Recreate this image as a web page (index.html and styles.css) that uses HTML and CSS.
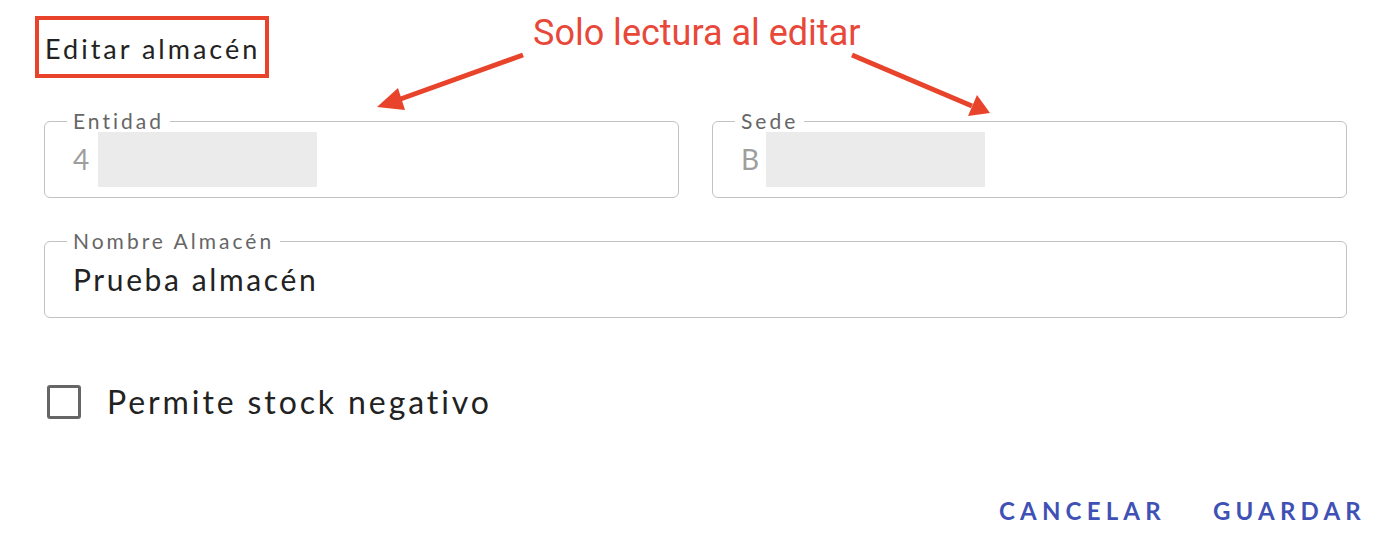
FILE: index.html
```html
<!DOCTYPE html>
<html lang="es">
<head>
    <meta charset="UTF-8">
    <title>Editar almacén</title>
    <link rel="stylesheet" href="styles.css">
</head>
<body>
  <div class="dialog">
    <div class="head">
      <h2 class="title">Editar almacén</h2>
    </div>
    <div class="row two">
      <fieldset class="field readonly">
        <legend>Entidad</legend>
        <div class="value">4<span class="redact"></span></div>
      </fieldset>
      <fieldset class="field readonly">
        <legend>Sede</legend>
        <div class="value">B<span class="redact"></span></div>
      </fieldset>
    </div>
    <div class="row">
      <fieldset class="field">
        <legend>Nombre Almacén</legend>
        <div class="value">Prueba almacén</div>
      </fieldset>
    </div>
    <label class="check">
      <span class="box"></span>
      <span>Permite stock negativo</span>
    </label>
    <div class="actions">
      <button class="btn">CANCELAR</button>
      <button class="btn">GUARDAR</button>
    </div>

    <!-- nota sobre la captura -->
    <div class="note">Solo lectura al editar</div>
    <svg class="arrows" width="1390" height="554" viewBox="0 0 1390 554">
      <line x1="523" y1="55" x2="395" y2="101" stroke="#e8432b" stroke-width="5"/>
      <polygon points="377,107 398,88 405,110" fill="#e8432b"/>
      <line x1="852" y1="55" x2="972" y2="106" stroke="#e8432b" stroke-width="5"/>
      <polygon points="990,113 968,116 977,95" fill="#e8432b"/>
    </svg>
  </div>
</body>
</html>
```

FILE: styles.css
```css
* {
  margin: 0px;
  padding: 0px;
  box-sizing: border-box;
}
body {
  background: #fff;
  font-family: Lato, "Noto Sans", sans-serif;
  color: #222;
}
.dialog {
  position: relative;
  width: 1390px;
  height: 554px;
  padding: 16px 43px 0 44px;
}
.head {
  display: flex;
}
.title {
  margin-left: -9px;
  height: 62px;
  width: 234px;
  border: 4px solid #e8432b;
  padding: 4px 0 0 6px;
  font-size: 27px;
  font-weight: 400;
  letter-spacing: 3px;
  line-height: 50px;
  color: #222;
}
.row {
  display: flex;
  gap: 33px;
  margin-top: 33px;
}
.field {
  flex: 1;
  border: 1px solid #c2c2c2;
  border-radius: 6px;
  padding: 0 28px 10px 28px;
}
.field legend {
  margin-left: -6px;
  padding: 0 6px 0 6px;
  font-size: 21px;
  line-height: 20px;
  color: #666;
  letter-spacing: 3px;
}
.value {
  position: relative;
  height: 56px;
  line-height: 56px;
  font-size: 30px;
  letter-spacing: 2.6px;
  color: #222;
}
.readonly .value {
  color: #9e9e9e;
  font-size: 28px;
}
.redact {
  position: absolute;
  left: 25px;
  top: 1px;
  width: 219px;
  height: 55px;
  background: #ebebeb;
}
.check {
  display: flex;
  align-items: center;
  gap: 26px;
  margin-top: 64px;
  margin-left: 3px;
  font-size: 32px;
  letter-spacing: 2.9px;
  color: #222;
}
.box {
  width: 34px;
  height: 34px;
  border: 3px solid #666;
  border-radius: 3px;
}
.actions {
  display: flex;
  justify-content: flex-end;
  gap: 47px;
  margin-top: 75px;
  margin-right: -19px;
}
.btn {
  border: none;
  background: none;
  font-family: Lato, "Noto Sans", sans-serif;
  font-size: 24px;
  font-weight: 700;
  letter-spacing: 5.2px;
  color: #3f51b5;
}
.note {
  position: absolute;
  left: 533px;
  top: 15px;
  font-family: Roboto, "Liberation Sans", sans-serif;
  font-size: 36px;
  line-height: 36px;
  color: #e8483a;
}
.arrows {
  position: absolute;
  left: 0;
  top: 0;
}
```
